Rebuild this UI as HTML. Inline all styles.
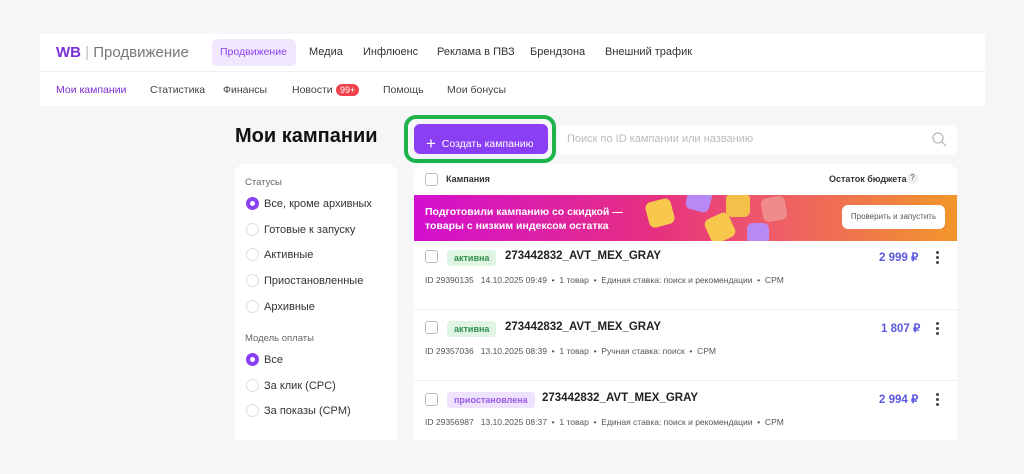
<!DOCTYPE html>
<html><head><meta charset="utf-8"><style>
*{margin:0;padding:0;box-sizing:border-box}
body{width:1024px;height:474px;background:#f6f6f8;font-family:"Liberation Sans",sans-serif;position:relative;overflow:hidden;color:#222}
.a{position:absolute;white-space:nowrap}
.hdr{left:40px;top:34px;width:945px;height:72px;background:#fff}
.nav{font-size:11px;color:#333;top:46px}
.sub{font-size:10.5px;color:#444;top:84px}
.card{background:#fff;border-radius:10px}
.radio{width:13px;height:13px;border:1px solid #ddd;border-radius:50%;background:#fff}
.radio.on{border:4px solid #8b3ff5}
.rl{font-size:11px;color:#333}
.cb{width:13px;height:13px;border:1.5px solid #bbb;border-radius:3px}
.tag{font-size:9px;padding:3px 7px;border-radius:3px;font-weight:bold}
.name{font-size:11.5px;font-weight:bold;color:#222}
.meta{font-size:8.5px;color:#555}
.price{font-size:11.5px;color:#5b57e0;font-weight:bold}
.dots{width:3px;height:3px;background:#444;border-radius:50%;box-shadow:0 5px 0 #444,0 10px 0 #444}
</style></head><body>
<div class="a hdr"></div>
<div class="a" style="left:40px;top:71px;width:945px;height:1px;background:#eee"></div>
<div class="a" style="left:56px;top:44px;font-size:15px"><b style="color:#7b2fd6">WB</b> <span style="color:#bbb">|</span> <span style="color:#777">Продвижение</span></div>
<div class="a" style="left:212px;top:39px;width:84px;height:27px;background:#f1e8fd;border-radius:5px"></div>
<div class="a nav" style="left:220px;color:#8b3ff5;font-size:10.5px">Продвижение</div>
<div class="a nav" style="left:309px">Медиа</div>
<div class="a nav" style="left:363px">Инфлюенс</div>
<div class="a nav" style="left:437px">Реклама в ПВЗ</div>
<div class="a nav" style="left:530px">Брендзона</div>
<div class="a nav" style="left:605px">Внешний трафик</div>
<div class="a sub" style="left:56px;color:#7b2fd6">Мои кампании</div>
<div class="a sub" style="left:150px">Статистика</div>
<div class="a sub" style="left:223px">Финансы</div>
<div class="a sub" style="left:292px">Новости</div>
<div class="a" style="left:336px;top:84px;background:#f0424c;color:#fff;font-size:9px;border-radius:7px;padding:1px 4px">99+</div>
<div class="a sub" style="left:383px">Помощь</div>
<div class="a sub" style="left:447px">Мои бонусы</div>

<div class="a" style="left:235px;top:125px;font-size:20px;font-weight:bold;color:#111">Мои кампании</div>
<div class="a" style="left:404px;top:115px;width:152px;height:48px;border:4px solid #1db34a;border-radius:12px"></div>
<div class="a" style="left:414px;top:124px;width:134px;height:30px;background:#8b3ff5;border-radius:6px;color:#fff;font-size:10.5px;padding:8px 0 0 12px"><span style="font-size:17px;position:relative;top:2px;font-weight:300">+</span>&nbsp; Создать кампанию</div>
<div class="a card" style="left:558px;top:125px;width:399px;height:30px;border-radius:7px"></div>
<div class="a" style="left:567px;top:133px;font-size:11px;color:#bbb">Поиск по ID кампании или названию</div>
<svg class="a" style="left:932px;top:132px" width="15" height="15"><circle cx="6" cy="6" r="5" fill="none" stroke="#bbb" stroke-width="1.3"/><path d="M10 10l4 4" stroke="#bbb" stroke-width="1.3"/></svg>

<div class="a card" style="left:235px;top:164px;width:162px;height:276px;border-radius:10px 10px 0 0"></div>
<div class="a" style="left:245px;top:177px;font-size:9.5px;color:#666">Статусы</div>
<div class="a radio on" style="left:246px;top:197px"></div><div class="a rl" style="left:264px;top:198px">Все, кроме архивных</div>
<div class="a radio" style="left:246px;top:223px"></div><div class="a rl" style="left:264px;top:224px">Готовые к запуску</div>
<div class="a radio" style="left:246px;top:248px"></div><div class="a rl" style="left:264px;top:249px">Активные</div>
<div class="a radio" style="left:246px;top:274px"></div><div class="a rl" style="left:264px;top:275px">Приостановленные</div>
<div class="a radio" style="left:246px;top:300px"></div><div class="a rl" style="left:264px;top:301px">Архивные</div>
<div class="a" style="left:245px;top:333px;font-size:9.5px;color:#666">Модель оплаты</div>
<div class="a radio on" style="left:246px;top:353px"></div><div class="a rl" style="left:264px;top:354px">Все</div>
<div class="a radio" style="left:246px;top:379px"></div><div class="a rl" style="left:264px;top:380px">За клик (CPC)</div>
<div class="a radio" style="left:246px;top:404px"></div><div class="a rl" style="left:264px;top:405px">За показы (CPM)</div>

<div class="a card" style="left:414px;top:164px;width:543px;height:276px;border-radius:10px 10px 0 0"></div>
<div class="a cb" style="left:425px;top:173px"></div>
<div class="a" style="left:446px;top:174px;font-size:9px;font-weight:bold;color:#333">Кампания</div>
<div class="a" style="left:829px;top:174px;font-size:9px;font-weight:bold;color:#333">Остаток бюджета</div>
<div class="a" style="left:907px;top:173px;width:11px;height:11px;border-radius:50%;background:#eee;font-size:8px;text-align:center;color:#555">?</div>
<div class="a" style="left:414px;top:195px;width:543px;height:46px;background:linear-gradient(90deg,#d30fcf 0%,#e6317f 45%,#ee5a6a 65%,#f2962a 100%);overflow:hidden">
<div style="position:absolute;left:233px;top:5px;width:26px;height:26px;background:#f7c84c;border-radius:6px;transform:rotate(-15deg)"></div>
<div style="position:absolute;left:273px;top:-8px;width:24px;height:24px;background:#b889f5;border-radius:6px;transform:rotate(15deg)"></div>
<div style="position:absolute;left:293px;top:20px;width:26px;height:26px;background:#f7c84c;border-radius:6px;transform:rotate(-25deg)"></div>
<div style="position:absolute;left:312px;top:-2px;width:24px;height:24px;background:#f5c04a;border-radius:6px"></div>
<div style="position:absolute;left:348px;top:2px;width:24px;height:24px;background:#f08b8b;border-radius:6px;transform:rotate(-10deg)"></div>
<div style="position:absolute;left:333px;top:28px;width:22px;height:22px;background:#b889f5;border-radius:6px"></div>
</div>
<div class="a" style="left:425px;top:205px;font-size:10.5px;font-weight:bold;color:#fff;line-height:14px">Подготовили кампанию со скидкой —<br>товары с низким индексом остатка</div>
<div class="a" style="left:842px;top:205px;width:103px;height:24px;background:#fff;border-radius:6px;font-size:8px;color:#555;text-align:center;line-height:24px">Проверить и запустить</div>

<div class="a cb" style="left:425px;top:250px"></div>
<div class="a tag" style="left:447px;top:250px;background:#e0f4e4;color:#2f8f4a">активна</div>
<div class="a name" style="left:505px;top:250px">273442832_AVT_MEX_GRAY</div>
<div class="a meta" style="left:425px;top:275px">ID 29390135 &nbsp; 14.10.2025 09:49 &nbsp;•&nbsp; 1 товар &nbsp;•&nbsp; Единая ставка: поиск и рекомендации &nbsp;•&nbsp; CPM</div>
<div class="a price" style="left:879px;top:250px">2 999 ₽</div>
<div class="a dots" style="left:936px;top:251px"></div>
<div class="a" style="left:414px;top:309px;width:543px;height:1px;background:#eee"></div>

<div class="a cb" style="left:425px;top:321px"></div>
<div class="a tag" style="left:447px;top:321px;background:#e0f4e4;color:#2f8f4a">активна</div>
<div class="a name" style="left:505px;top:321px">273442832_AVT_MEX_GRAY</div>
<div class="a meta" style="left:425px;top:346px">ID 29357036 &nbsp; 13.10.2025 08:39 &nbsp;•&nbsp; 1 товар &nbsp;•&nbsp; Ручная ставка: поиск &nbsp;•&nbsp; CPM</div>
<div class="a price" style="left:881px;top:321px">1 807 ₽</div>
<div class="a dots" style="left:936px;top:322px"></div>
<div class="a" style="left:414px;top:380px;width:543px;height:1px;background:#eee"></div>

<div class="a cb" style="left:425px;top:393px"></div>
<div class="a tag" style="left:447px;top:392px;background:#efe2fd;color:#9a5be8">приостановлена</div>
<div class="a name" style="left:542px;top:392px">273442832_AVT_MEX_GRAY</div>
<div class="a meta" style="left:425px;top:417px">ID 29356987 &nbsp; 13.10.2025 08:37 &nbsp;•&nbsp; 1 товар &nbsp;•&nbsp; Единая ставка: поиск и рекомендации &nbsp;•&nbsp; CPM</div>
<div class="a price" style="left:879px;top:392px">2 994 ₽</div>
<div class="a dots" style="left:936px;top:393px"></div>
</body></html>
